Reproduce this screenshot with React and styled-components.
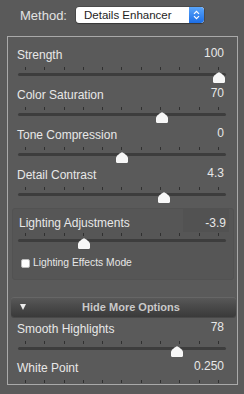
import React from "react";
import styled, { createGlobalStyle } from "styled-components";

const Global = createGlobalStyle`
  html, body { margin: 0; padding: 0; background: #5a5a5a; }
  body { font-family: "Liberation Sans", Arial, sans-serif; color: #e6e6e6; }
`;

const Page = styled.div`
  width: 244px;
  height: 394px;
  background: #5a5a5a;
  overflow: hidden;
`;

const Header = styled.div`
  height: 36px;
  display: flex;
  align-items: flex-start;
`;

const MethodLabel = styled.span`
  margin: 8px 0 0 20px;
  font-size: 13px;
  line-height: 15px;
  color: #e2e2e2;
`;

const Select = styled.div`
  margin: 7px 0 0 9px;
  width: 128px;
  height: 16px;
  box-sizing: border-box;
  background: #fff;
  border-radius: 3px;
  box-shadow: 0 0 0 0.5px rgba(0, 0, 0, 0.35), 0 1px 1px rgba(0, 0, 0, 0.25);
  display: flex;
  overflow: hidden;
`;

const SelectText = styled.span`
  flex: 1;
  padding-left: 8px;
  font-size: 11.5px;
  line-height: 16px;
  color: #1e1e1e;
`;

const Stepper = styled.div`
  width: 15px;
  height: 16px;
  background: linear-gradient(#5aa6fb, #1c6ee6);
  border-radius: 0 3px 3px 0;
  display: flex;
  align-items: center;
  justify-content: center;
`;

const Panel = styled.div`
  margin-left: 7px;
  width: 231px;
  height: 349px;
  box-sizing: border-box;
  border: 1px solid #a9a9a9;
  padding-top: 11px;
  overflow: hidden;
`;

const Row = styled.div`
  height: ${(p) => p.$h}px;
  padding: 0 13px 0 9px;
  display: flex;
  flex-direction: column;
`;

const RowHead = styled.div`
  height: 14px;
  display: flex;
  justify-content: space-between;
  align-items: flex-start;
`;

const Label = styled.span`
  font-size: 12px;
  line-height: 14px;
  color: #e8e8e8;
  white-space: nowrap;
`;

const Value = styled.span`
  font-size: 12px;
  line-height: 14px;
  margin-top: -2px;
  color: #e8e8e8;
`;

const SliderBox = styled.div`
  position: relative;
  width: 208px;
  height: 16px;
  margin-top: ${(p) => p.$mt}px;
  margin-left: ${(p) => p.$ml}px;
  flex-shrink: 0;
`;

const Ticks = styled.div`
  height: 3px;
  padding: 0 7px;
  display: flex;
  justify-content: space-between;
`;

const Tick = styled.span`
  width: 1px;
  height: 3px;
  background: #303030;
`;

const Track = styled.div`
  margin-top: 3px;
  height: 3px;
  border-radius: 2px;
  background: #3d3d3d;
`;

const Thumb = styled.svg`
  position: absolute;
  top: 5px;
  width: 12px;
  height: 11px;
`;

function Slider({ frac, ml = 1, mt = 5 }) {
  const center = 7 + frac * 194;
  return (
    <SliderBox $ml={ml} $mt={mt}>
      <Ticks>
        {Array.from({ length: 11 }).map((_, i) => (
          <Tick key={i} />
        ))}
      </Ticks>
      <Track />
      <Thumb viewBox="0 0 12 11" style={{ left: `${Math.round(center - 6)}px` }}>
        <path
          d="M6 0.3 C7.2 0.3 12 4.2 12 6 V9.8 C12 10.5 11.5 11 10.8 11 H1.2 C0.5 11 0 10.5 0 9.8 V6 C0 4.2 4.8 0.3 6 0.3 Z"
          fill="#f7f7f7"
        />
      </Thumb>
    </SliderBox>
  );
}

function SliderRow({ label, value, frac, h = 40 }) {
  return (
    <Row $h={h}>
      <RowHead>
        <Label>{label}</Label>
        <Value>{value}</Value>
      </RowHead>
      <Slider frac={frac} />
    </Row>
  );
}

const Group = styled.div`
  margin: 0 3px 0 4px;
  height: 72px;
  box-sizing: border-box;
  border: 1px solid #525252;
  border-radius: 3px;
  background: #565656;
  display: flex;
  flex-direction: column;
`;

const GroupHead = styled.div`
  height: 23px;
  display: flex;
  justify-content: space-between;
  padding: 0 4px 0 6px;
`;

const GroupLabel = styled(Label)`
  padding-top: 7px;
`;

const Field = styled.div`
  width: 46px;
  height: 23px;
  box-sizing: border-box;
  background: #525252;
  padding: 7px 3px 0 0;
  text-align: right;
  font-size: 12px;
  line-height: 14px;
  color: #e8e8e8;
`;

const CheckRow = styled.label`
  margin: 8px 0 0 8px;
  height: 12px;
  display: flex;
  align-items: center;
  gap: 3px;
`;

const Box = styled.span`
  width: 9px;
  height: 9px;
  box-sizing: border-box;
  background: #fff;
  border-radius: 2px;
  border: 0.5px solid #bbb;
  flex-shrink: 0;
`;

const CheckText = styled.span`
  white-space: nowrap;
  font-size: 10.3px;
  line-height: 12px;
  color: #e6e6e6;
`;

const MoreBar = styled.div`
  margin: 17px 1px 5px 3px;
  height: 20px;
  border-radius: 3px;
  background: linear-gradient(#5a5a5a 0%, #4a4a4a 45%, #3a3a3a 100%);
  box-shadow: inset 0 1px 0 rgba(255, 255, 255, 0.08), 0 1px 0 rgba(0, 0, 0, 0.2);
  display: flex;
  align-items: center;
`;

const Triangle = styled.span`
  margin-left: 9px;
  width: 0;
  height: 0;
  border-left: 3.5px solid transparent;
  border-right: 3.5px solid transparent;
  border-top: 6px solid #ececec;
`;

const MoreTitle = styled.span`
  flex: 1;
  text-align: center;
  font-size: 11px;
  font-weight: bold;
  color: #c9c9c9;
`;

export default function App() {
  return (
    <Page>
      <Global />
      <Header>
        <MethodLabel>Method:</MethodLabel>
        <Select>
          <SelectText>Details Enhancer</SelectText>
          <Stepper>
            <svg width="7" height="10" viewBox="0 0 7 10">
              <path d="M1 3.8 L3.5 1.3 L6 3.8 M1 6.2 L3.5 8.7 L6 6.2" fill="none" stroke="#fff" strokeWidth="1.2" />
            </svg>
          </Stepper>
        </Select>
      </Header>
      <Panel>
        <SliderRow label="Strength" value="100" frac={1} />
        <SliderRow label="Color Saturation" value="70" frac={0.706} />
        <SliderRow label="Tone Compression" value="0" frac={0.5} />
        <SliderRow label="Detail Contrast" value="4.3" frac={0.716} />
        <Group>
          <GroupHead>
            <GroupLabel>Lighting Adjustments</GroupLabel>
            <Field>-3.9</Field>
          </GroupHead>
          <Slider frac={0.304} ml={5} mt={1} />
          <CheckRow>
            <Box />
            <CheckText>Lighting Effects Mode</CheckText>
          </CheckRow>
        </Group>
        <MoreBar>
          <Triangle />
          <MoreTitle>Hide More Options</MoreTitle>
        </MoreBar>
        <SliderRow label="Smooth Highlights" value="78" frac={0.783} h={39} />
        <SliderRow label="White Point" value="0.250" frac={0.5} h={39} />
      </Panel>
    </Page>
  );
}
